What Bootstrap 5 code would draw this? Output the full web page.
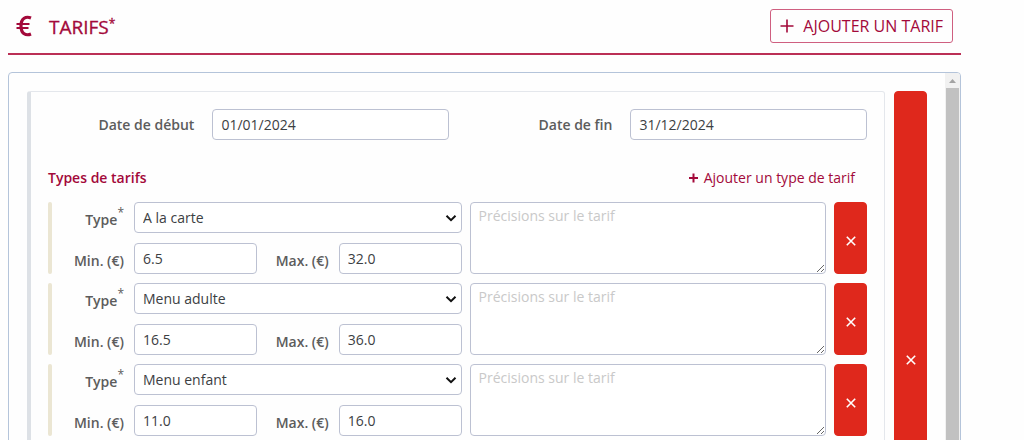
<!DOCTYPE html>
<html lang="fr">
<head>
<meta charset="utf-8">
<meta name="viewport" content="width=device-width, initial-scale=1">
<title>Tarifs</title>
<link href="https://cdn.jsdelivr.net/npm/bootstrap@5.3.0/dist/css/bootstrap.min.css" rel="stylesheet">
<style>
  body { font-family: "Open Sans", "Noto Sans", sans-serif; font-size: 14px; line-height: 20px; color: #3c4043; background: #fefefe; overflow: hidden; }
  .page { padding: 0 63px 0 8px; }
  .brand { color: #a3093a; }
  .section-head { height: 55px; border-bottom: 2px solid #bb2f55; padding: 0 8px; }
  .section-title { font-size: 19px; line-height: 28px; font-weight: 400; gap: 16px; -webkit-text-stroke: .3px currentColor; }
  .section-title svg { margin-bottom: 2px; }
  .section-title sup, .star { font-size: 12px; font-weight: 400; }
  .btn-add { --bs-btn-color: #a3093a; --bs-btn-border-color: #cf5f80; --bs-btn-hover-bg: #a3093a; --bs-btn-hover-color: #fff; --bs-btn-padding-x: 9px; --bs-btn-padding-y: 3px; --bs-btn-font-size: 16px; --bs-btn-line-height: 26px; --bs-btn-border-radius: 3px; gap: 9px; margin-bottom: 2px; }
  .panel { margin-top: 17px; border: 1px solid #b4c4da; border-radius: 4px; }
  .panel-body { padding: 18px; gap: 9px; }
  .tarif { border: 1px solid #e4e7ec; border-left: 4px solid #dde1e6; border-radius: 3px; padding: 17px 17px 18px; min-height: 532px; }
  .dates { display: grid; grid-template-columns: 1fr 1fr; column-gap: 17px; }
  .date-field { display: grid; grid-template-columns: 1fr 59%; column-gap: 18px; align-items: center; }
  .form-label, .date-field label { font-weight: 600; color: #5c5c5c; margin: 0; text-align: right; white-space: nowrap; }
  .form-control, .form-select { font-size: 14px; line-height: 21px; padding: 4px 8px; border: 1px solid #bcc1d2; border-radius: 4px; color: #3c4043; background-color: #fff; min-height: 0; }
  .form-control::placeholder { color: #c9c9c9; }
  textarea.form-control { padding-top: 2px; }
  .form-select { background-image: url("data:image/svg+xml,%3Csvg xmlns='http://www.w3.org/2000/svg' viewBox='0 0 12 12'%3E%3Cpath d='M1.5 3.8 6 8.2l4.500-4.400' fill='none' stroke='%23111' stroke-width='2'/%3E%3C/svg%3E"); background-size: 12px 12px; background-position: right 4px center; }
  .types-head { margin: 28px 0 14px; padding-right: 12px; }
  .types-head h2 { font-size: 14px; line-height: 20px; font-weight: 600; margin: 0; }
  .types-head a { gap: 6px; text-decoration: none; }
  .types { display: grid; row-gap: 9px; }
  .type-row { display: grid; grid-template-columns: 29fr 25fr 33px; column-gap: 8px; }
  .fields { display: grid; grid-template-columns: 72px 1fr 62px 1fr; gap: 10px; align-items: center; position: relative; padding-left: 4px; }
  .fields::before { content: ""; position: absolute; left: 0; top: 0; bottom: 0; width: 4px; border-radius: 2px; background: #ebe6d3; }
  .span-rest { grid-column: 2 / -1; }
  .fields .form-label { padding-top: 4px; }
  .star { top: -8px; line-height: 0; }
  .btn-remove { --bs-btn-bg: #df281c; --bs-btn-border-color: #df281c; --bs-btn-color: #fff; --bs-btn-hover-bg: #c21f14; --bs-btn-hover-color: #fff; --bs-btn-padding-x: 0; --bs-btn-padding-y: 0; --bs-btn-border-radius: 4px; width: 33px; }
  .btn-remove svg { margin-top: 2px; }
  .scroll-track { width: 15px; background: #f1f1f1; border-radius: 0 3px 0 0; padding: 0 1px; }
  .scroll-arrow { height: 15px; }
  .scroll-thumb { background: #c1c1c1; }
</style>
</head>
<body>
<main class="page">
  <header class="section-head d-flex justify-content-between align-items-center">
    <h1 class="section-title brand d-flex align-items-center m-0">
      <svg width="17" height="22" viewBox="0 0 17 22" fill="none" stroke="currentColor" aria-hidden="true"><path d="M15 3C10 1 5 3 5 11c0 8 5 10 10 8" stroke-width="3.200"/><path d="M.5 9h13M.5 13h12" stroke-width="2.200"/></svg>
      <span>TARIFS<sup>*</sup></span>
    </h1>
    <button type="button" class="btn btn-add d-flex align-items-center">
      <svg width="14" height="14" viewBox="0 0 14 14" stroke="currentColor" stroke-width="1.600" aria-hidden="true"><path d="M7 .5v13M.5 7h13"/></svg>
      AJOUTER UN TARIF
    </button>
  </header>

  <section class="panel d-flex">
    <div class="panel-body d-flex flex-grow-1">
      <div class="tarif flex-grow-1">
        <div class="dates">
          <div class="date-field"><label for="debut">Date de début</label><input id="debut" type="text" class="form-control" value="01/01/2024"></div>
          <div class="date-field"><label for="fin">Date de fin</label><input id="fin" type="text" class="form-control" value="31/12/2024"></div>
        </div>
        <div class="types-head d-flex justify-content-between align-items-center">
          <h2 class="brand">Types de tarifs</h2>
          <a href="#" class="brand d-flex align-items-center"><svg width="9" height="10" viewBox="0 0 9 10" stroke="currentColor" stroke-width="2" aria-hidden="true"><path d="M4.500 .5v9M0 5h9"/></svg>Ajouter un type de tarif</a>
        </div>
        <div class="types">
          <div class="type-row">
            <div class="fields">
              <label class="form-label" for="type1">Type<sup class="star">*</sup></label>
              <select id="type1" class="form-select span-rest"><option>A la carte</option></select>
              <label class="form-label" for="min1">Min. (€)</label><input id="min1" type="text" class="form-control" value="6.5">
              <label class="form-label" for="max1">Max. (€)</label><input id="max1" type="text" class="form-control" value="32.0">
            </div>
            <textarea class="form-control" placeholder="Précisions sur le tarif" aria-label="Précisions sur le tarif"></textarea>
            <button type="button" class="btn btn-remove"><svg width="10" height="10" viewBox="0 0 10 10" stroke="currentColor" stroke-width="1.600" aria-hidden="true"><path d="M.8 .8l8.400 8.400M9.200 .8L.8 9.200"/></svg></button>
          </div>
          <div class="type-row">
            <div class="fields">
              <label class="form-label" for="type2">Type<sup class="star">*</sup></label>
              <select id="type2" class="form-select span-rest"><option>Menu adulte</option></select>
              <label class="form-label" for="min2">Min. (€)</label><input id="min2" type="text" class="form-control" value="16.5">
              <label class="form-label" for="max2">Max. (€)</label><input id="max2" type="text" class="form-control" value="36.0">
            </div>
            <textarea class="form-control" placeholder="Précisions sur le tarif" aria-label="Précisions sur le tarif"></textarea>
            <button type="button" class="btn btn-remove"><svg width="10" height="10" viewBox="0 0 10 10" stroke="currentColor" stroke-width="1.600" aria-hidden="true"><path d="M.8 .8l8.400 8.400M9.200 .8L.8 9.200"/></svg></button>
          </div>
          <div class="type-row">
            <div class="fields">
              <label class="form-label" for="type3">Type<sup class="star">*</sup></label>
              <select id="type3" class="form-select span-rest"><option>Menu enfant</option></select>
              <label class="form-label" for="min3">Min. (€)</label><input id="min3" type="text" class="form-control" value="11.0">
              <label class="form-label" for="max3">Max. (€)</label><input id="max3" type="text" class="form-control" value="16.0">
            </div>
            <textarea class="form-control" placeholder="Précisions sur le tarif" aria-label="Précisions sur le tarif"></textarea>
            <button type="button" class="btn btn-remove"><svg width="10" height="10" viewBox="0 0 10 10" stroke="currentColor" stroke-width="1.600" aria-hidden="true"><path d="M.8 .8l8.400 8.400M9.200 .8L.8 9.200"/></svg></button>
          </div>
        </div>
      </div>
      <button type="button" class="btn btn-remove flex-shrink-0"><svg width="10" height="10" viewBox="0 0 10 10" stroke="currentColor" stroke-width="1.600" aria-hidden="true"><path d="M.8 .8l8.400 8.400M9.200 .8L.8 9.200"/></svg></button>
    </div>
    <div class="scroll-track d-flex flex-column flex-shrink-0" aria-hidden="true">
      <div class="scroll-arrow d-flex align-items-center justify-content-center"><svg width="7" height="4" viewBox="0 0 7 4" fill="#a3a3a3"><path d="M3.500 0L7 4H0z"/></svg></div>
      <div class="scroll-thumb flex-grow-1"></div>
    </div>
  </section>
</main>
<script src="https://cdn.jsdelivr.net/npm/bootstrap@5.3.0/dist/js/bootstrap.bundle.min.js"></script>
</body>
</html>
